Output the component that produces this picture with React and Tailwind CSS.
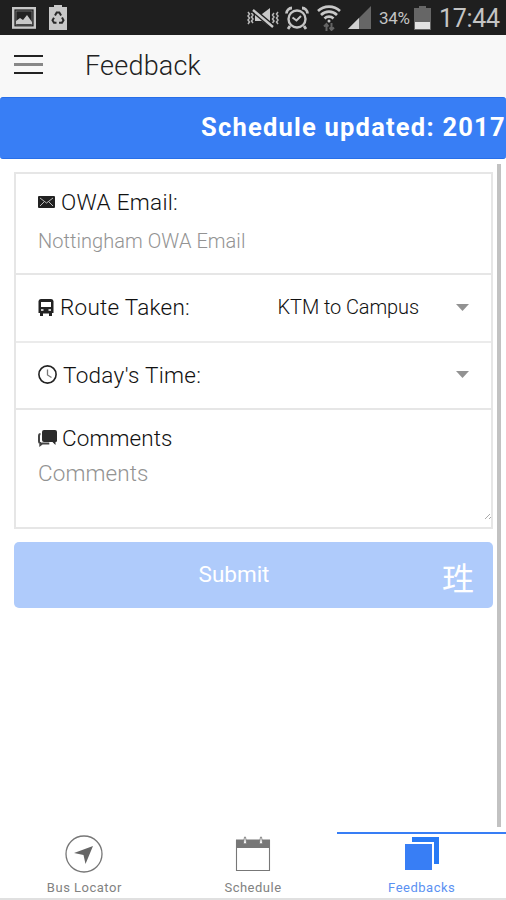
import React from 'react';

function StatusBar() {
  return (
    <div className="flex h-[35px] shrink-0 items-center bg-[#1f1f1f] pl-3 pr-[6px] text-[#c4c4c4]">
      <svg className="h-[22px] w-6" viewBox="0 0 24 22">
        <rect x="1.2" y="1.2" width="21.6" height="19.4" fill="none" stroke="#c8c8c8" strokeWidth="2.4" />
        <rect x="4" y="4" width="16" height="14" fill="#222" stroke="#999" strokeWidth=".6" />
        <path d="M4 17v-3l4-3 3 2 4-5 5 7v2z" fill="#c8c8c8" />
      </svg>
      <svg className="ml-[13px] h-[25px] w-[18px]" viewBox="0 0 18 25">
        <path d="M5 2V0h8v2h5v23H0V2z" fill="#c8c8c8" />
        <g fill="none" stroke="#292929" strokeWidth="2">
          <path d="M6 10.5l1.7-3h2.6l1.8 3M13 12.5l1.5 2.8-1.5 2.5h-3M7.5 17.8H5l-1.5-2.5L5 12.7" />
        </g>
      </svg>
      <div className="flex-1" />
      <svg className="h-[22px] w-[34px]" viewBox="0 0 34 22">
        <g fill="none" stroke="#b8b8b8" strokeWidth="1.5">
          <path d="M2 5l1.5 2L2 9l1.5 2L2 13l1.5 2L2 17M5.5 6L7 8l-1.5 2L7 12l-1.5 2L7 16M28 6l-1.5 2 1.5 2-1.5 2 1.5 2-1.5 2M32 5l-1.5 2L32 9l-1.5 2 1.5 2-1.5 2 1.5 2" />
        </g>
        <path d="M9 7h7l8-6v19l-8-6H9z" fill="#c8c8c8" />
        <path d="M7 3l20 17" stroke="#1f1f1f" strokeWidth="5" />
        <path d="M7 3l20 17" stroke="#c8c8c8" strokeWidth="2.4" />
      </svg>
      <svg className="ml-[5px] h-6 w-6" viewBox="0 0 24 24" fill="none" stroke="#c4c4c4">
        <circle cx="12" cy="13" r="8.5" strokeWidth="2.4" />
        <path d="M7.5 11.5l4 3L16 10" strokeWidth="2" />
        <path d="M1.5 7.5c0-3 2.5-5.5 5.5-5.5M22.5 7.5C22.5 4.5 20 2 17 2M5 20l-2 3M19 20l2 3" strokeWidth="2.8" />
      </svg>
      <svg className="ml-2 h-[26px] w-6" viewBox="0 0 24 26" fill="none" stroke="#c8c8c8" strokeWidth="2.6">
        <path d="M1 6c6-5.8 16-5.8 22 0M4 10c4.500-4.500 11.500-4.500 16 0M7.500 13.500c2.500-2.500 6.500-2.500 9 0" />
        <circle cx="12" cy="16" r="1.5" fill="#c8c8c8" stroke="none" />
        <path d="M9.5 26v-6M7 21.500l2.500-2.500 2 2.500M14.500 18v6M12.500 22.500l2 2.500 2.500-2.500" stroke="#656565" strokeWidth="2" />
      </svg>
      <svg className="ml-[7px] h-[23px] w-[23px]" viewBox="0 0 23 23">
        <path d="M23 0v23H0z" fill="#666" />
        <path d="M11 12v11H0z" fill="#d0d0d0" />
      </svg>
      <span className="ml-2 mt-[2px] w-[32px] whitespace-nowrap text-[17px] leading-none tracking-[-0.3px]">34%</span>
      <svg className="ml-[3px] h-[24px] w-[17px]" viewBox="0 0 17 24">
        <path d="M5 2V0h7v2h5v22H0V2z" fill="#666" />
        <path d="M1 16h15v7H1z" fill="#e3e3e3" />
      </svg>
      <span className="ml-[8px] mt-[2px] w-[61px] whitespace-nowrap text-[25px] leading-none tracking-[-0.3px]">17:44</span>
    </div>
  );
}

function Header() {
  return (
    <header className="flex h-[62px] shrink-0 items-center bg-[#f8f8f8] pl-[14px]">
      <div className="mb-[4px] flex w-[29px] flex-col gap-[6px]">
        <div className="h-[2px] bg-[#222]" />
        <div className="h-[3px] bg-[#888]" />
        <div className="h-[2px] bg-[#222]" />
      </div>
      <h1 className="ml-[42px] text-[27px] font-light leading-none tracking-[0.2px] text-[#222]">Feedback</h1>
    </header>
  );
}

function Caret() {
  return (
    <svg className="h-[7px] w-[13px]" viewBox="0 0 13 7">
      <path d="M0 0h13L6.5 7z" fill="#929292" />
    </svg>
  );
}

function Tab({ label, active, children }) {
  return (
    <div
      className={
        active
          ? 'flex flex-1 flex-col items-center border-t-2 border-[#387ef5] text-[#5b91f2]'
          : 'flex flex-1 flex-col items-center border-t-2 border-transparent text-[#828282]'
      }
    >
      {children}
      <span className="mt-[7px] text-[13px] leading-[15px] tracking-[0.5px]">{label}</span>
    </div>
  );
}

export default function App() {
  return (
    <div className="flex h-[900px] w-[506px] flex-col overflow-hidden bg-white font-['Roboto','Noto_Sans_CJK_SC',sans-serif] text-[#111]">
      <StatusBar />
      <Header />
      <div className="flex h-[62px] shrink-0 overflow-hidden rounded-[3px] border-y border-[#286fe8] bg-[#387ef5] pl-[201px] pt-[13px]">
        <span className="whitespace-nowrap text-[25.5px] font-bold leading-[32px] tracking-[1.22px] text-white">
          Schedule updated: 2017
        </span>
      </div>

      <main className="flex h-[673px] shrink-0 pl-[14px] pt-[5px]">
        <div className="w-[479px] pt-[8px]">
          <div className="border-2 border-[#e6e6e6] text-[22.5px] font-light leading-[28px]">
            <div className="h-[101px] border-b-2 border-[#e6e6e6] pl-[22px] pt-[14px]">
              <div className="flex items-center">
                <svg className="mr-[6px] h-[12px] w-[17px]" viewBox="0 0 17 12">
                  <rect width="17" height="12" rx="1" fill="#222" />
                  <path d="M2 2l6.5 5L15 2M2 10l4-4M15 10l-4-4" fill="none" stroke="#bbb" />
                </svg>
                <span className="tracking-[0.3px]">OWA Email:</span>
              </div>
              <div className="mt-[11px] text-[20px] tracking-[0.05px] text-[#939393]">Nottingham OWA Email</div>
            </div>
            <div className="flex h-[68px] items-center border-b-2 border-[#ebebeb] pb-[2px] pl-[22px] pr-[22px]">
              <svg className="mr-[6px] h-[17px] w-4" viewBox="0 0 16 17">
                <path d="M3 0h10q2 0 2.5 2v12H14v3h-3v-2.5H5V17H2v-3H.5V2Q1 0 3 0z" fill="#222" />
                <path d="M3 3h10v5H3z" fill="#fff" />
                <path d="M3 11h2.5M10.5 11H13" stroke="#fff" strokeWidth="1.5" />
              </svg>
              <span className="tracking-[0.25px]">Route Taken:</span>
              <span className="ml-auto mr-[37px] text-[20px] tracking-[-0.1px]">KTM to Campus</span>
              <Caret />
            </div>
            <div className="flex h-[67px] items-center border-b-2 border-[#e6e6e6] pb-[2px] pl-[22px] pr-[22px]">
              <svg className="mr-[6px] h-[19px] w-[19px]" viewBox="0 0 19 19" fill="none">
                <circle cx="9.5" cy="9.5" r="8.6" stroke="#222" strokeWidth="1.6" />
                <path d="M9.5 4.5V10l4 2.5" stroke="#777" strokeWidth="1.3" />
              </svg>
              <span className="tracking-[0.3px]">Today's Time:</span>
              <span className="ml-auto flex">
                <Caret />
              </span>
            </div>
            <div className="flex h-[117px] flex-col pl-[22px] pt-[14px]">
              <div className="flex items-center">
                <svg className="mr-[5px] h-[17px] w-[19px]" viewBox="0 0 19 17">
                  <path d="M6 0h11q2 0 2 2v9q0 1-1.5 1v3l-3-3H6q-2 0-2-2V2q0-2 2-2z" fill="#2b2b2b" />
                  <path d="M2.5 4Q1 4 1 6v5q0 2 1.3 2v2l2-1.500h7" fill="none" stroke="#444" strokeWidth="2" />
                </svg>
                <span className="tracking-[0.1px]">Comments</span>
              </div>
              <div className="mt-[7px] tracking-[0.1px] text-[#939393]">Comments</div>
              <svg className="ml-auto mt-auto mb-[7px] h-[6px] w-[6px]" viewBox="0 0 6 6">
                <path d="M0 5l5-5M4 5l2-2" stroke="#aaa" />
              </svg>
            </div>
          </div>

          <button className="mt-[13px] flex h-[66px] w-full items-center rounded-[5px] bg-[#afcbfb] text-white">
            <span className="w-[440px] text-center text-[22.5px]">Submit</span>
            <span className="-ml-[12px] mt-px font-['Noto_Sans_CJK_SC',sans-serif] text-[32px] leading-none">珄</span>
          </button>
        </div>
        <div className="ml-[4px] h-[663px] w-[4px] bg-[#c2c2c2]" />
      </main>

      <nav className="flex h-[68px] shrink-0 border-b-2 border-[#e0e0e0]">
        <Tab label="Bus Locator">
          <svg className="mt-px h-[38px] w-[38px]" viewBox="0 0 38 38">
            <circle cx="19" cy="19" r="18" fill="none" stroke="#777" strokeWidth="1.3" />
            <path d="M28 11l-7.500 18-2-9-9.500-2z" fill="#666" />
          </svg>
        </Tab>
        <Tab label="Schedule">
          <svg className="mt-px h-[38px] w-[38px]" viewBox="0 0 38 38">
            <path d="M2.500 5h33v30.500h-33z" fill="none" stroke="#777" strokeWidth="1.1" />
            <path d="M2 5h34v8H2z" fill="#777" />
            <path d="M9.500 8l1-6h1l1 6q-1.500 2-3 0M25.500 8l1-6h1l1 6q-1.500 2-3 0" fill="#fff" stroke="#777" strokeWidth=".8" />
          </svg>
        </Tab>
        <Tab label="Feedbacks" active>
          <svg className="mt-px h-[38px] w-[38px]" viewBox="0 0 38 38">
            <path d="M9 2h27v27h-5V7H9z" fill="#287af5" />
            <path d="M2 9h27v26H2z" fill="#387ef5" />
          </svg>
        </Tab>
      </nav>
    </div>
  );
}
